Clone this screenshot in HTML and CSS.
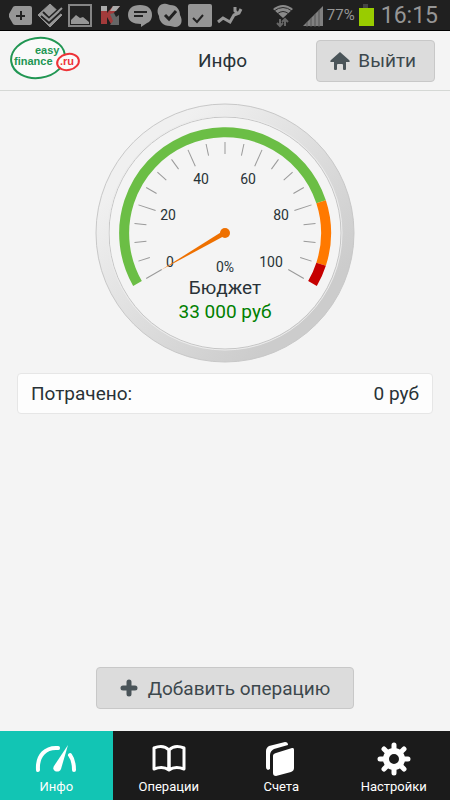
FILE: index.html
```html
<!DOCTYPE html>
<html lang="ru">
<head>
  <meta charset="UTF-8" />
  <meta name="viewport" content="width=device-width, initial-scale=1.0"/>
  <title>Инфо</title>
  <link rel="stylesheet" href="styles.css">
</head>
<body>

<div class="status-bar">
  <svg class="notifications" width="246" height="31" viewBox="0 0 246 31" aria-hidden="true">
    <!-- plus tag -->
    <path d="M15 6h15a2 2 0 0 1 2 2v15a2 2 0 0 1-2 2H15c-1 0-2-1-2-1l-4-7v-3l4-7s1-1 2-1z" fill="#969696"/>
    <path d="M21 11v9M16 16h9" stroke="#222" stroke-width="2"/>
    <!-- double check -->
    <path d="M50 4l12 11-12 12-12-12z" fill="#969696" stroke="#969696" stroke-linejoin="round"/>
    <path d="M43 12l6 6 13-12M41 16l8 7 14-13" fill="none" stroke="#222" stroke-width="2"/>
    <path d="M42 14l7 6 13-12" fill="none" stroke="#969696" stroke-width="2"/>
    <!-- picture -->
    <rect x="69" y="5" width="22" height="21" fill="#222" stroke="#858585" stroke-width="2"/>
    <path d="M71 24v-4l5-5 4 3 3-1 6 5v2z" fill="#969696"/>
    <!-- antivirus -->
    <path d="M101 6h6v7l6-7h7l-8 9 5 9h-6l-4-7v7h-6z" fill="#a33b3b"/>
    <path d="M101 6h6v5h-6zM113 6h7l-4 5h-6z" fill="#aaa"/>
    <path d="M110 14l4-1 2 4 3-2v10h-9l3-4z" fill="#666"/>
    <!-- chat -->
    <path d="M140 5c8 0 12 4 12 10 0 4-2 7-5 8l-6 4v-3c-8 0-13-3-13-9s4-10 12-10z" fill="#969696"/>
    <path d="M134 12h13M134 16h9" stroke="#222" stroke-width="2"/>
    <!-- check bubble -->
    <path d="M163 4c4-1 6 1 7 1 7 0 10 5 10 10 3 5 2 12-5 12-2 0-3-1-5-1-7 0-11-5-11-10-3-5-1-11 4-12z" fill="#969696"/>
    <path d="M165 15l4 4 7-8" fill="none" stroke="#222" stroke-width="3"/>
    <!-- check box -->
    <rect x="188" y="4" width="24" height="23" rx="2" fill="#969696"/>
    <path d="M193 18l4 4 6-7" fill="none" stroke="#222" stroke-width="2"/>
    <!-- runner -->
    <path d="M218 22l5-4 7 4 4-7 5-2 2-4" fill="none" stroke="#969696" stroke-width="3"/>
    <path d="M235 7v4l3 3" fill="none" stroke="#969696" stroke-width="3"/>
  </svg>
  <div class="system">
    <svg width="52" height="30" viewBox="274 0 52 30" aria-hidden="true">
      <path d="M275 9q10-8 20 0L285 18z" fill="#8a8a8a"/>
      <path d="M276 11q9-7 18 0M279 14q6-5 12 0" fill="none" stroke="#2a2a2a"/>
      <path d="M282 19v7m-3-3l3 3 3-3M287 26v-7m-3 3l3-3 3 3" fill="none" stroke="#666" stroke-width="2"/>
      <path d="M305 26L325 6v20z" fill="#808080"/>
      <path d="M309 22v5M313 18v9M317 14v13M321 10v17" stroke="#555"/>
    </svg>
    <span class="percent">77%</span>
    <svg width="16" height="30" viewBox="0 0 16 30" aria-hidden="true">
      <path d="M5 4h5v4H5z" fill="#444"/>
      <path d="M1 8h15v18H1z" fill="#99cc00"/>
    </svg>
    <span class="clock">16:15</span>
  </div>
</div>

<header class="header">
  <svg class="logo" width="72" height="44" viewBox="0 0 72 44" role="img" aria-label="easyfinance.ru">
    <ellipse cx="28" cy="22" rx="27" ry="20" transform="rotate(-8 28 22)" fill="#fafafa" stroke="#219653" stroke-width="2"/>
    <text x="25" y="18" class="logo-text">easy</text>
    <text x="4" y="29" class="logo-text">finance</text>
    <ellipse cx="58" cy="26" rx="11" ry="8" transform="rotate(-12 58 26)" fill="#fafafa" stroke="#ee3338" stroke-width="2"/>
    <text x="50" y="29" class="logo-text logo-zone">.ru</text>
  </svg>
  <h1>Инфо</h1>
  <button class="btn btn-exit">
    <svg width="20" height="18" viewBox="0 0 20 18" aria-hidden="true">
      <path d="M10 0l9 8c1 1 1 2 0 2h-3v7q0 1-1 1h-1q-1 0-1-1v-4q0-1-1-1H8q-1 0-1 1v4q0 1-1 1H5q-1 0-1-1v-7H1c-1 0-1-1 0-2z" fill="#4a5459"/>
    </svg>
    Выйти
  </button>
</header>

<main class="content">
  <svg class="gauge" viewBox="0 0 260 260" role="img" aria-label="Бюджет 33 000 руб, потрачено 0%">
    <defs>
      <linearGradient id="rim" x1="0" y1="0" x2="1" y2="1">
        <stop offset="0.2" stop-color="#f0f0f0"/>
        <stop offset="0.8" stop-color="#cccccc"/>
      </linearGradient>
    </defs>
    <circle cx="130" cy="130" r="129" fill="url(#rim)" stroke="#c8c8c8"/>
    <circle cx="130" cy="130" r="116" fill="#f4f4f4" stroke="#c6c6c6"/>
    <circle cx="130" cy="130" r="117" fill="none" stroke="#ececec"/>

    <g class="zones">
      <path d="M42.5 180.5A101 101 0 1 1 226.1 98.8" stroke="#6bbe45"/>
      <path d="M226.1 98.8A101 101 0 0 1 226.1 161.2" stroke="#ff7900"/>
      <path d="M226.1 161.2A101 101 0 0 1 217.5 180.5" stroke="#c60000"/>
    </g>

    <g class="ticks">
      <path d="M130 39v18" transform="rotate(-120 130 130)"/>
      <path d="M130 39v12" transform="rotate(-108 130 130)"/>
      <path d="M130 39v12" transform="rotate(-96 130 130)"/>
      <path d="M130 39v12" transform="rotate(-84 130 130)"/>
      <path d="M130 39v18" transform="rotate(-72 130 130)"/>
      <path d="M130 39v12" transform="rotate(-60 130 130)"/>
      <path d="M130 39v12" transform="rotate(-48 130 130)"/>
      <path d="M130 39v12" transform="rotate(-36 130 130)"/>
      <path d="M130 39v18" transform="rotate(-24 130 130)"/>
      <path d="M130 39v12" transform="rotate(-12 130 130)"/>
      <path d="M130 39v12"/>
      <path d="M130 39v12" transform="rotate(12 130 130)"/>
      <path d="M130 39v18" transform="rotate(24 130 130)"/>
      <path d="M130 39v12" transform="rotate(36 130 130)"/>
      <path d="M130 39v12" transform="rotate(48 130 130)"/>
      <path d="M130 39v12" transform="rotate(60 130 130)"/>
      <path d="M130 39v18" transform="rotate(72 130 130)"/>
      <path d="M130 39v12" transform="rotate(84 130 130)"/>
      <path d="M130 39v12" transform="rotate(96 130 130)"/>
      <path d="M130 39v12" transform="rotate(108 130 130)"/>
      <path d="M130 39v18" transform="rotate(120 130 130)"/>
    </g>

    <g class="scale">
      <text x="75" y="164">0</text>
      <text x="73" y="117">20</text>
      <text x="106" y="81">40</text>
      <text x="153" y="81">60</text>
      <text x="186" y="117">80</text>
      <text x="176" y="164">100</text>
      <text x="130" y="169">0%</text>
    </g>

    <path d="M128 128L66 167L131 132z" fill="#ee7000"/>
    <circle cx="130" cy="130" r="5" fill="#ee7000"/>

    <text class="caption" x="130" y="191">Бюджет</text>
    <text class="caption amount" x="130" y="215">33 000 руб</text>
  </svg>

  <div class="spent">
    <span>Потрачено:</span>
    <span>0 руб</span>
  </div>

  <button class="btn btn-add">
    <svg width="18" height="18" viewBox="0 0 18 18" aria-hidden="true">
      <path d="M9 3v12M3 9h12" stroke="#4a5459" stroke-width="5" stroke-linecap="round"/>
    </svg>
    Добавить операцию
  </button>
</main>

<nav class="tabs">
  <a href="#info" class="active">
    <svg width="44" height="36" viewBox="0 0 44 36" aria-hidden="true">
      <path d="M4 29c-1-15 8-23 20-22M36 14c3 4 4 9 4 15" fill="none" stroke="#fff" stroke-width="4" stroke-linecap="round"/>
      <path d="M34 4l-7 24c-2 5-10 2-7-3z" fill="#fff"/>
    </svg>
    Инфо
  </a>
  <a href="#operations">
    <svg width="44" height="36" viewBox="0 0 44 36" aria-hidden="true">
      <path d="M22 9c-4-4-10-4-15-2v21c5-2 11-2 15 1 4-3 10-3 15-1V7c-5-2-11-2-15 2zv20" fill="none" stroke="#fff" stroke-width="3" stroke-linejoin="round"/>
      <path d="M22 8v21" stroke="#fff" stroke-width="3"/>
    </svg>
    Операции
  </a>
  <a href="#accounts">
    <svg width="44" height="36" viewBox="0 0 44 36" aria-hidden="true">
      <path d="M9 29c-2-1-2-2-2-4V10c0-2 1-4 3-5l16-4c2 0 3 1 3 3l-14 4c-2 1-4 3-4 6v14z" fill="#fff"/>
      <path d="M17 12l16-5c1 0 2 0 2 2v18c0 2-1 3-3 4l-15 4c-2 0-3-1-3-3V15c0-2 1-2 3-3z" fill="#fff"/>
    </svg>
    Счета
  </a>
  <a href="#settings">
    <svg width="44" height="36" viewBox="0 0 44 36" aria-hidden="true">
      <circle cx="22" cy="18" r="8" fill="none" stroke="#fff" stroke-width="6"/>
      <path d="M22 8V4M22 28v4M12 18H8M32 18h4M15 11l-3-3M29 11l3-3M15 25l-3 3M29 25l3 3" stroke="#fff" stroke-width="5" stroke-linecap="round"/>
    </svg>
    Настройки
  </a>
</nav>

</body>
</html>
```
FILE: styles.css
```css
* {
  box-sizing: border-box;
}

body {
  display: flex;
  flex-direction: column;
  min-height: 100vh;
  margin: 0;
  background: #f4f4f4;
  color: #283237;
  font-family: Roboto, "Open Sans", sans-serif;
  font-size: 19px;
}

svg {
  display: block;
  flex: none;
}

.status-bar {
  display: flex;
  justify-content: space-between;
  height: 31px;
  overflow: hidden;
  background: #202020;
  border-bottom: 1px solid #000;
}

.system {
  display: flex;
  align-items: center;
  gap: 3px;
  padding-right: 12px;
  color: #969696;
}

.percent {
  font-size: 15px;
}

.clock {
  padding-left: 4px;
  font-size: 23px;
}

.header {
  display: grid;
  grid-template-columns: 1fr auto 1fr;
  align-items: center;
  height: 60px;
  padding: 0 15px 0 10px;
  border-bottom: 1px solid #d5d8d5;
}

.header h1 {
  margin: 0;
  font-size: 19px;
  font-weight: 400;
}

.logo {
  margin-bottom: 6px;
}

.logo-text {
  fill: #219653;
  font-family: "Liberation Sans", sans-serif;
  font-size: 11px;
  font-weight: 700;
}

.logo-zone {
  fill: #ee3338;
}

.btn {
  display: flex;
  align-items: center;
  justify-content: center;
  height: 42px;
  border: 1px solid #c8c8c8;
  border-radius: 4px;
  background: #dcdcdc;
  color: #3c484d;
  font-family: inherit;
  font-size: 19px;
  cursor: pointer;
}

.btn-exit {
  justify-self: end;
  gap: 8px;
  padding: 0 18px 0 13px;
}

.content {
  display: flex;
  flex: 1;
  flex-direction: column;
  align-items: center;
  padding: 12px 17px 22px;
}

.gauge {
  width: 58%;
  min-width: 260px;
  max-width: 320px;
}

.zones {
  fill: none;
  stroke-width: 10;
}

.ticks {
  stroke: #999;
  stroke-width: 1;
}

.scale {
  fill: #283237;
  font-size: 14px;
  text-anchor: middle;
}

.caption {
  fill: #283237;
  font-size: 19px;
  text-anchor: middle;
}

.amount {
  fill: #008000;
}

.spent {
  display: flex;
  align-items: center;
  justify-content: space-between;
  width: 100%;
  height: 41px;
  margin-top: 10px;
  padding: 0 13px;
  border: 1px solid #e6e6e6;
  border-radius: 4px;
  background: #fdfdfd;
}

.btn-add {
  gap: 10px;
  min-width: 258px;
  margin-top: auto;
  padding: 0 22px;
}

.tabs {
  display: grid;
  grid-template-columns: repeat(4, 1fr);
  background: #1b1b1b;
}

.tabs a {
  display: flex;
  flex-direction: column;
  align-items: center;
  height: 69px;
  padding-top: 10px;
  color: #fff;
  font-size: 13px;
  line-height: 20px;
  text-decoration: none;
}

.tabs .active {
  background: #12c5b4;
}
```
